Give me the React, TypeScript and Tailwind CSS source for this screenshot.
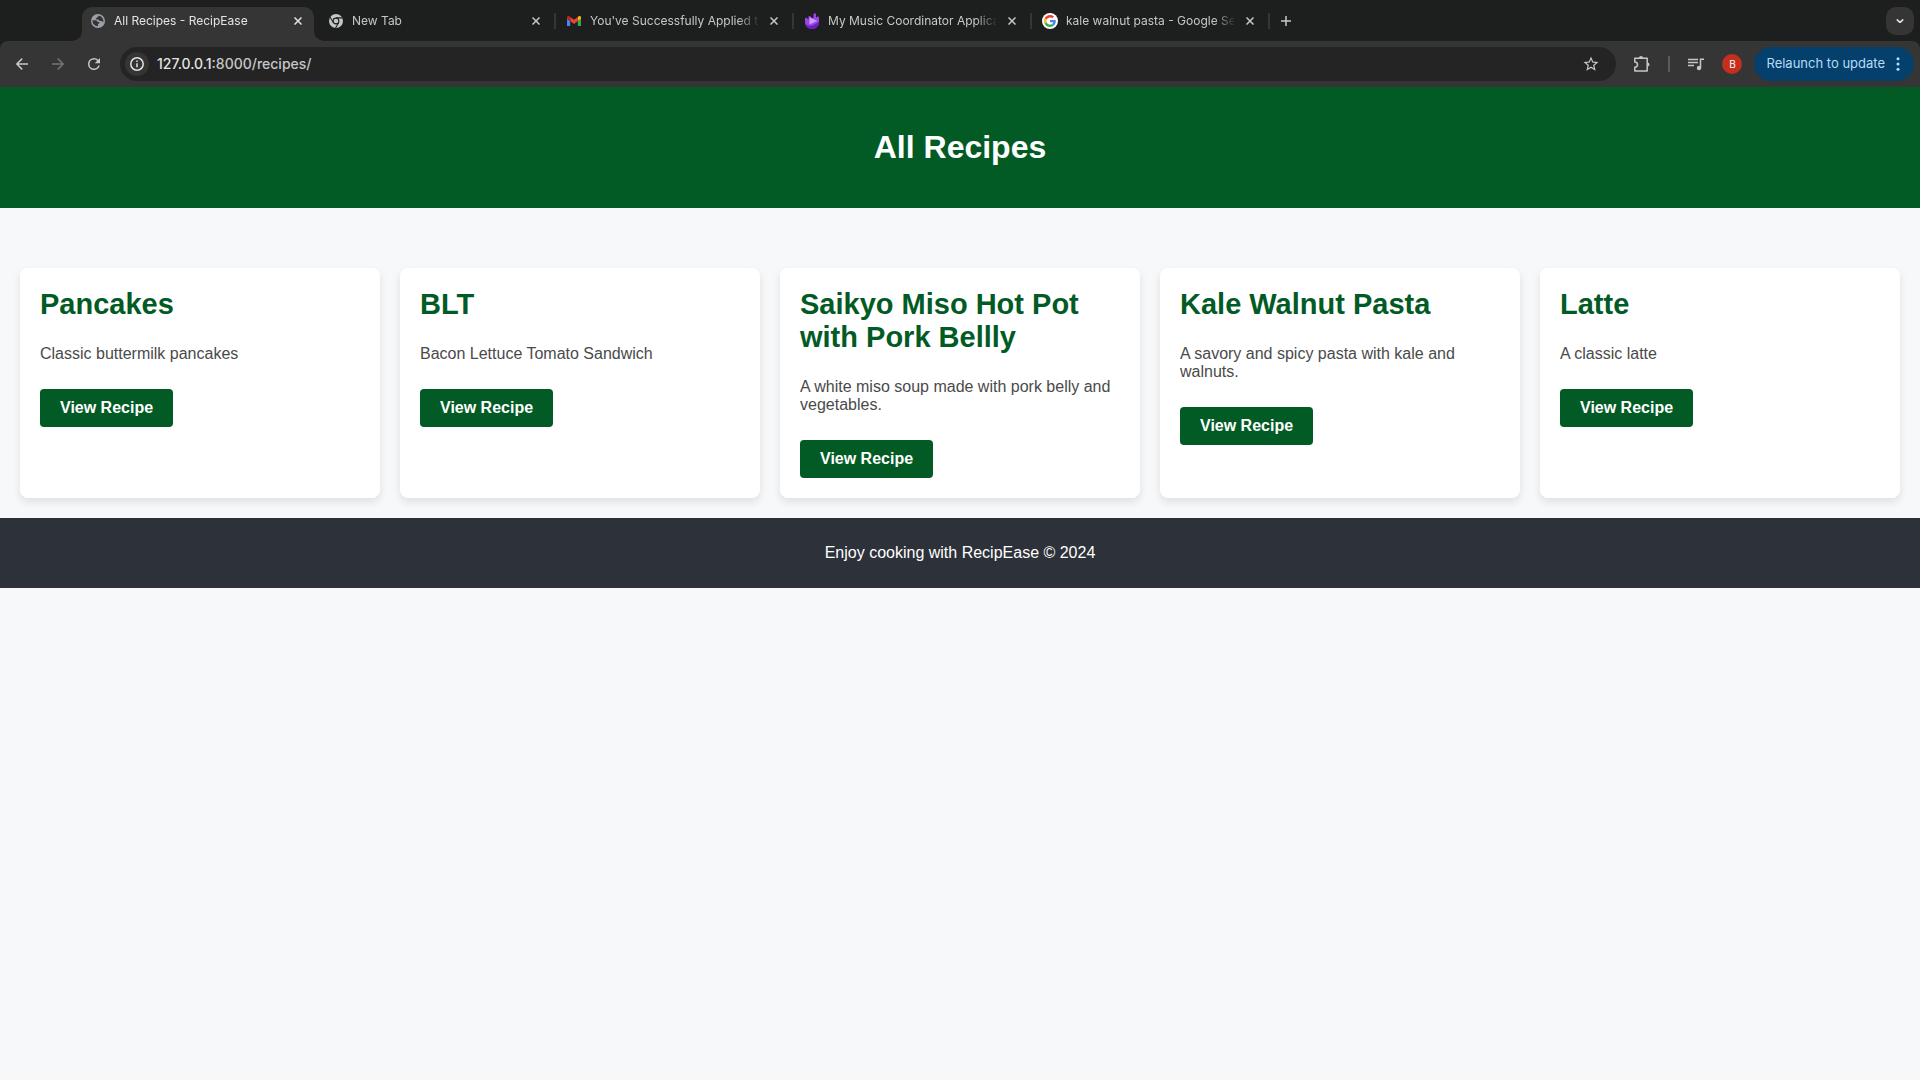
import type { ReactNode } from "react";

type Tab = { title: string; icon: ReactNode; active?: boolean };

const GlobeIcon = () => (
  <svg viewBox="0 0 14 14" className="size-3.5 shrink-0" aria-hidden="true">
    <circle cx="7" cy="7" r="7" fill="#9aa0a6" />
    <path d="M1.500 6.200h2.700c1.300 0 2.300.7 2.300 1.700h1.300c.9 0 1 .9.500 1.400-.5.400-1.300.5-1.300 1.200v1.800A5.500 5.500 0 0 1 1.500 6.200z" fill="#353535" />
    <path d="M8.200 1.700C7.800 2.600 6.300 2.500 6 3.400c-.2.700-1.200.6-1.200 1.300 0 .8 1.200.8 2.200.8s1 1.300 1.900 1.500c1 .2 1.600-.3 2.300.4.400.4.500.9 1.100.9A5.500 5.500 0 0 0 8.200 1.700z" fill="#353535" />
  </svg>
);

const ChromeIcon = () => (
  <svg viewBox="0 0 24 24" className="size-3.5 shrink-0" aria-hidden="true">
    <circle cx="12" cy="12" r="12" fill="#c4c7c5" />
    <circle cx="12" cy="12" r="5.800" fill="#1d1f1e" />
    <circle cx="12" cy="12" r="4" fill="#c4c7c5" />
    <path d="M12 6.600h11M7.300 14.700L1.800 5.200M16.700 14.700L11.200 24" stroke="#1d1f1e" strokeWidth="1.800" fill="none" />
  </svg>
);

const GmailIcon = () => (
  <svg viewBox="0 0 24 18" className="w-3.5 shrink-0" aria-hidden="true">
    <path fill="#4285f4" d="M1.600 18h3.900V8.700L0 4.600v11.800C0 17.300.7 18 1.600 18z" />
    <path fill="#34a853" d="M18.500 18h3.900c.9 0 1.600-.7 1.600-1.600V4.600l-5.500 4.100z" />
    <path fill="#fbbc04" d="M18.500 1.600v7.100L24 4.600V2.500c0-2-2.300-3.200-3.900-2z" />
    <path fill="#ea4335" d="M5.500 8.700V1.600L12 6.500l6.500-4.900v7.100L12 13.600z" />
    <path fill="#c5221f" d="M0 2.500v2.100l5.500 4.100V1.600L3.900.5C2.300-.7 0 .5 0 2.500z" />
  </svg>
);

const PurpleIcon = () => (
  <svg viewBox="0 0 14 16" className="h-4 w-3.5 shrink-0" aria-hidden="true">
    <path fill="#9a45ea" d="M0 5.500C0 4.500 1.500 4.300 2.200 5.200l1.300 1.300V4c0-1.300 2-1.300 2.500-.3l1 1.500 1.500-.7V1.500C8.500-.3 11-.3 11 1.500V5l.8-1c.8-.8 2.200-.4 2.200.8V9c0 4-3 7-7 7s-7-3-7-7z" />
    <path fill="#6d1fc4" d="M.3 10.500C2.500 13 6 13.300 9 11.800l5-3V9c0 4-3 7-7 7-3.200 0-5.800-2-6.700-5.500z" />
    <path fill="#cf9bfb" d="M4.500 4.300v7.200l7.800-3.500z" />
  </svg>
);

const GoogleIcon = () => (
  <span className="-mx-px flex size-4 shrink-0 items-center justify-center rounded-full bg-white">
    <svg viewBox="0 0 48 48" className="size-3" aria-hidden="true">
      <path fill="#EA4335" d="M24 9.500c3.540 0 6.710 1.220 9.210 3.600l6.850-6.850C35.900 2.380 30.470 0 24 0 14.620 0 6.510 5.380 2.560 13.220l7.980 6.190C12.430 13.720 17.740 9.500 24 9.500z" />
      <path fill="#4285F4" d="M46.980 24.550c0-1.570-.15-3.090-.38-4.550H24v9.020h12.940c-.58 2.960-2.260 5.480-4.780 7.180l7.730 6c4.510-4.180 7.090-10.360 7.090-17.650z" />
      <path fill="#FBBC05" d="M10.530 28.590c-.48-1.450-.76-2.990-.76-4.590s.27-3.140.76-4.590l-7.980-6.190C.92 16.460 0 20.120 0 24c0 3.880.92 7.540 2.560 10.780l7.970-6.190z" />
      <path fill="#34A853" d="M24 48c6.480 0 11.930-2.130 15.890-5.810l-7.730-6c-2.150 1.450-4.920 2.300-8.160 2.300-6.260 0-11.570-4.220-13.470-9.910l-7.980 6.190C6.510 42.620 14.620 48 24 48z" />
    </svg>
  </span>
);

const tabs: Tab[] = [
  { title: "All Recipes - RecipEase", icon: <GlobeIcon />, active: true },
  { title: "New Tab", icon: <ChromeIcon /> },
  { title: "You've Successfully Applied to", icon: <GmailIcon /> },
  { title: "My Music Coordinator Applica", icon: <PurpleIcon /> },
  { title: "kale walnut pasta - Google Se", icon: <GoogleIcon /> },
];

const recipes = [
  { name: "Pancakes", text: "Classic buttermilk pancakes" },
  { name: "BLT", text: "Bacon Lettuce Tomato Sandwich" },
  { name: "Saikyo Miso Hot Pot with Pork Bellly", text: "A white miso soup made with pork belly and vegetables." },
  { name: "Kale Walnut Pasta", text: "A savory and spicy pasta with kale and walnuts." },
  { name: "Latte", text: "A classic latte" },
];

const Flare = ({ side }: { side: "left" | "right" }) => (
  <svg
    viewBox="0 0 10 10"
    className={side === "left" ? "absolute bottom-0 -left-2.5 size-2.5" : "absolute bottom-0 -right-2.5 size-2.5"}
    aria-hidden="true"
  >
    <path fill="#353535" d={side === "left" ? "M10 0v10H0A10 10 0 0 0 10 0z" : "M0 0v10h10A10 10 0 0 1 0 0z"} />
  </svg>
);

function BrowserTab({ tab }: { tab: Tab }) {
  return (
    <div className="flex h-full w-[238px] items-center">
      <div
        className={
          tab.active
            ? "relative flex h-full w-[232px] items-center rounded-t-[10px] bg-[#353535] pb-1.5 pl-[9px] text-[#e3e3e3]"
            : "flex h-full w-[232px] items-center pb-1.5 pl-[9px] text-[#c7c7c7]"
        }
      >
        {tab.active && <Flare side="left" />}
        {tab.active && <Flare side="right" />}
        {tab.icon}
        <span className="ml-[9px] w-[168px] overflow-hidden text-xs whitespace-nowrap [mask-image:linear-gradient(to_right,#000_148px,transparent_170px)]">
          {tab.title}
        </span>
        <button aria-label={`Close ${tab.title}`} className="ml-2 flex size-4 items-center justify-center">
          <svg viewBox="0 0 8 8" className="size-2" fill="none" stroke="currentColor" strokeWidth="1.500" aria-hidden="true">
            <path d="M.5.5l7 7M7.500.5l-7 7" />
          </svg>
        </button>
      </div>
      {!tab.active && <span className="mb-1.5 ml-0.5 h-4 w-0.5 bg-[#353535]" />}
    </div>
  );
}

function BrowserChrome() {
  return (
    <div className="bg-[#1d1f1e] font-[Inter,sans-serif]">
      <div className="flex h-[41px] items-stretch justify-between pt-[7px]">
        <div className="flex pl-[82px]">
          {tabs.map((t) => (
            <BrowserTab key={t.title} tab={t} />
          ))}
          <button aria-label="New tab" className="ml-1.5 flex w-4 items-center justify-center pb-1.5 text-[#c7c7c7]">
            <svg viewBox="0 0 10 10" className="size-2.5" stroke="currentColor" strokeWidth="1.500" aria-hidden="true">
              <path d="M5 0v10M0 5h10" />
            </svg>
          </button>
        </div>
        <button aria-label="Search tabs" className="mr-1.5 flex size-7 items-center justify-center rounded-[10px] bg-[#353535] text-[#e3e3e3]">
          <svg viewBox="0 0 10 6" className="w-2" fill="none" stroke="currentColor" strokeWidth="2" aria-hidden="true">
            <path d="M1 .5l4 4 4-4" />
          </svg>
        </button>
      </div>
      <div className="flex h-[46px] items-center rounded-t-lg bg-[#353535] pr-1.5 pl-3.5 text-[#c7c7c7]">
        <button aria-label="Back" className="flex size-4 items-center justify-center">
          <svg viewBox="0 0 12 12" className="size-3" fill="none" stroke="currentColor" strokeWidth="1.500" aria-hidden="true">
            <path d="M12 6H1M6.200.6L.9 6l5.300 5.400" />
          </svg>
        </button>
        <button aria-label="Forward" className="ml-5 flex size-4 items-center justify-center text-[#747474]">
          <svg viewBox="0 0 12 12" className="size-3" fill="none" stroke="currentColor" strokeWidth="1.500" aria-hidden="true">
            <path d="M0 6h11M5.800.6L11.100 6l-5.300 5.400" />
          </svg>
        </button>
        <button aria-label="Reload" className="ml-5 flex size-4 items-center justify-center">
          <svg viewBox="0 0 24 24" className="size-[18px] shrink-0" fill="currentColor" aria-hidden="true">
            <path d="M17.650 6.350A7.950 7.950 0 0 0 12 4a8 8 0 1 0 7.730 10h-2.080A6 6 0 1 1 12 6c1.660 0 3.140.69 4.220 1.780L13 11h7V4z" />
          </svg>
        </button>
        <div className="ml-[18px] flex h-[34px] grow items-center rounded-full bg-[#242424] pr-4 pl-[5px]">
          <button aria-label="View site information" className="flex size-6 shrink-0 items-center justify-center rounded-full bg-[#353535] text-[#e3e3e3]">
            <svg viewBox="0 0 14 14" className="size-3.5" fill="none" stroke="currentColor" strokeWidth="1.500" aria-hidden="true">
              <circle cx="7" cy="7" r="6.200" />
              <path d="M7 6.200v4M7 3.600v1.500" />
            </svg>
          </button>
          <a href="#" aria-label="Address" className="ml-2 grow text-sm font-medium text-[#c7c7c7]">
            <span className="text-[#e3e3e3]">127.0.0.1</span>:8000/recipes/
          </a>
          <button aria-label="Bookmark this tab">
            <svg viewBox="0 0 24 24" className="size-[18px]" fill="currentColor" aria-hidden="true">
              <path d="M22 9.240l-7.190-.62L12 2 9.190 8.630 2 9.240l5.460 4.730L5.820 21 12 17.270 18.180 21l-1.630-7.030L22 9.240zM12 15.400l-3.760 2.270 1-4.280-3.320-2.880 4.380-.38L12 6.100l1.710 4.040 4.380.38-3.320 2.880 1 4.280L12 15.400z" />
            </svg>
          </button>
        </div>
        <button aria-label="Extensions" className="ml-[18px]">
          <svg viewBox="0 0 16 16" className="size-4" fill="none" stroke="currentColor" strokeWidth="1.500" aria-hidden="true">
            <path d="M.8 2.200h12.400v12.900H.8v-3.800c3.600-.4 3.600-4.900 0-5.300z" strokeLinejoin="round" />
            <path d="M5 2a2 2 0 0 1 4 0zM13.500 6.500a2 2 0 0 1 0 4z" fill="currentColor" stroke="none" />
          </svg>
        </button>
        <span className="ml-[18px] h-4 w-0.5 bg-[#5a5a5a]" />
        <button aria-label="Media controls" className="ml-[18px]">
          <svg viewBox="0 0 16 13" className="w-4" fill="none" stroke="currentColor" strokeWidth="1.500" aria-hidden="true">
            <path d="M0 1.500h10M0 4.500h10M0 7.500h6M12.500 10V1.300H16" />
            <circle cx="11" cy="10" r="2.200" fill="currentColor" stroke="none" />
          </svg>
        </button>
        <button aria-label="Profile" className="ml-[18px] flex size-5 items-center justify-center rounded-full bg-[#c5301e] text-[10px] text-white">
          B
        </button>
        <button className="ml-3 flex h-[34px] items-center rounded-full bg-[#04406b] pr-3.5 pl-3 text-[13px] whitespace-nowrap text-[#b5dcfa]">
          Relaunch to update
          <svg viewBox="0 0 4 14" className="ml-[11px] h-3.5 w-1" fill="currentColor" aria-hidden="true">
            <circle cx="2" cy="1.700" r="1.500" />
            <circle cx="2" cy="7" r="1.500" />
            <circle cx="2" cy="12.300" r="1.500" />
          </svg>
        </button>
      </div>
    </div>
  );
}

export default function App() {
  return (
    <div className="min-h-screen bg-[#f7f8fa] font-['Liberation_Sans',Arial,sans-serif]">
      <BrowserChrome />
      <header className="bg-[#025b25] px-5 py-[42px] text-center text-white">
        <h1 className="text-[32px] leading-[37px] font-bold">All Recipes</h1>
      </header>
      <main className="grid grid-cols-5 gap-5 px-5 pt-[60px] pb-5">
        {recipes.map((r) => (
          <article key={r.name} className="rounded-lg bg-white p-5 shadow-[0_4px_8px_rgba(0,0,0,0.1)]">
            <h2 className="text-[29px] leading-[33px] font-bold text-[#025b25]">{r.name}</h2>
            <p className="mt-6 leading-[18px] text-[#4a4a4a]">{r.text}</p>
            <a href="#" className="mt-[26px] inline-block rounded bg-[#025b25] px-5 py-2.5 align-top leading-[18px] font-bold text-white">
              View Recipe
            </a>
          </article>
        ))}
      </main>
      <footer className="bg-[#2d3139] py-[26px] text-center leading-[18px] text-white">
        <p>Enjoy cooking with RecipEase © 2024</p>
      </footer>
    </div>
  );
}
